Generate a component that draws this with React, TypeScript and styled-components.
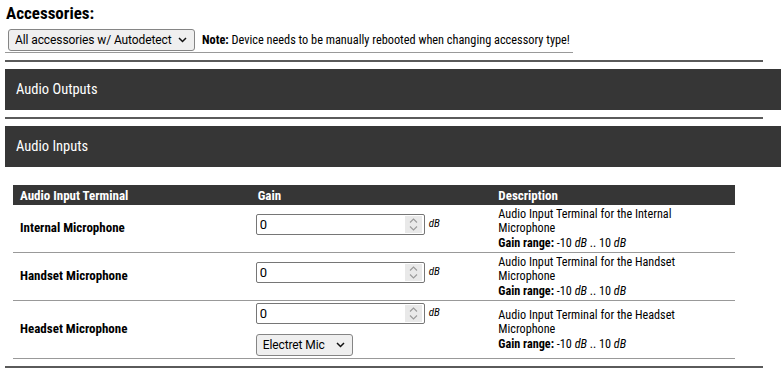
import React from "react";
import styled, { createGlobalStyle } from "styled-components";

const Global = createGlobalStyle`
  html, body { margin: 0; padding: 0; background: #fff; }
  body {
    font-family: "Roboto Condensed", "Liberation Sans Narrow", "DejaVu Sans Condensed", sans-serif;
    color: #000;
    overflow: hidden;
  }
`;

const Page = styled.div`
  width: 781px;
  padding: 3px 0 0 5px;
  box-sizing: border-box;
`;

const Title = styled.h2`
  margin: 0 0 0 1px;
  font-size: 17px;
  font-weight: 700;
  line-height: 20px;
`;

const AccessoryRow = styled.div`
  display: flex;
  align-items: center;
  gap: 7px;
  width: 568px;
  box-sizing: border-box;
  margin-top: 6px;
  padding: 0 0 1px 3px;
  border-bottom: 1px solid #999;
`;

const SelectWrap = styled.span<{ $w: number }>`
  position: relative;
  display: inline-flex;
  width: ${(p) => p.$w}px;
  height: 22px;
`;

const StyledSelect = styled.select`
  appearance: none;
  -webkit-appearance: none;
  width: 100%;
  height: 100%;
  box-sizing: border-box;
  margin: 0;
  border: 1px solid #858585;
  border-radius: 3px;
  background: #efefef;
  padding: 0 16px 0 6px;
  font-family: Roboto, "Liberation Sans", sans-serif;
  font-size: 12px;
  letter-spacing: -0.1px;
  color: #000;
`;

const Chevron = styled.svg`
  position: absolute;
  right: 8px;
  top: 50%;
  margin-top: -3px;
  width: 9px;
  height: 6px;
  pointer-events: none;
`;

const Note = styled.span`
  font-size: 12.3px;
  b { font-weight: 700; }
`;

const Rule = styled.hr`
  width: 758px;
  margin: 7px 0 0 0;
  border: 0;
  border-top: 2px solid #5a5a5a;
  height: 0;
`;

const SectionBar = styled.div`
  width: 776px;
  height: 41px;
  margin-top: 7px;
  background: #363636;
  color: #fff;
  display: flex;
  align-items: center;
  padding-left: 11px;
  box-sizing: border-box;
  font-size: 14.5px;
  font-weight: 400;
`;

const Table = styled.table`
  width: 722px;
  margin: 18px 0 0 8px;
  border-collapse: collapse;
  table-layout: fixed;
  font-size: 12.2px;
`;

const Th = styled.th<{ $first?: boolean }>`
  background: #363636;
  color: #fff;
  text-align: left;
  font-weight: 700;
  height: 20px;
  padding: 0 4px 0 ${(p) => (p.$first ? 7 : 4)}px;
  font-size: 13px;
`;

const Tr = styled.tr`
  border-bottom: 1px solid #999;
`;

const Td = styled.td<{ $label?: boolean }>`
  padding: 2px 4px 2px ${(p) => (p.$label ? 7 : 4)}px;
  vertical-align: middle;
  font-weight: ${(p) => (p.$label ? 700 : 400)};
  font-size: ${(p) => (p.$label ? 13 : 12.2)}px;
  line-height: 14.34px;
`;

const GainBox = styled.div`
  display: flex;
  flex-direction: column;
  align-items: flex-start;
  gap: 2px;
  margin-left: -2px;
`;

const InputLine = styled.div`
  display: flex;
  align-items: center;
  gap: 4px;
  margin-bottom: 8px;
`;

const InputWrap = styled.span`
  position: relative;
  display: inline-flex;
`;

const NumberInput = styled.input`
  width: 169px;
  height: 21px;
  box-sizing: border-box;
  margin: 0;
  font-family: Roboto, "Liberation Sans", sans-serif;
  font-size: 13px;
  padding: 1px 3px;
  border: 1px solid #767676;
  border-radius: 2px;
  -moz-appearance: textfield;
  &::-webkit-inner-spin-button,
  &::-webkit-outer-spin-button {
    -webkit-appearance: none;
    margin: 0;
  }
`;

const Spinner = styled.span`
  position: absolute;
  right: 3px;
  top: 2px;
  bottom: 2px;
  width: 17px;
  background: #e9e9e9;
  display: flex;
  align-items: center;
  justify-content: center;
  pointer-events: none;
`;

const Unit = styled.i`
  font-size: 11px;
`;

const rows = [
  { name: "Internal Microphone", what: "Internal", select: false },
  { name: "Handset Microphone", what: "Handset", select: false },
  { name: "Headset Microphone", what: "Headset", select: true },
];

function Select({ w, label }: { w: number; label: string }) {
  return (
    <SelectWrap $w={w}>
      <StyledSelect defaultValue="v">
        <option value="v">{label}</option>
      </StyledSelect>
      <Chevron viewBox="0 0 9 6">
        <path d="M1 1 L4.5 4.5 L8 1" fill="none" stroke="#111" strokeWidth="1.5" />
      </Chevron>
    </SelectWrap>
  );
}

export default function App() {
  return (
    <Page>
      <Global />
      <Title>Accessories:</Title>
      <AccessoryRow>
        <Select w={187} label="All accessories w/ Autodetect" />
        <Note>
          <b>Note:</b> Device needs to be manually rebooted when changing accessory type!
        </Note>
      </AccessoryRow>
      <Rule />
      <SectionBar>Audio Outputs</SectionBar>
      <Rule />
      <SectionBar>Audio Inputs</SectionBar>
      <Table>
        <thead>
          <tr>
            <Th $first>Audio Input Terminal</Th>
            <Th>Gain</Th>
            <Th>Description</Th>
          </tr>
        </thead>
        <tbody>
          {rows.map((r) => (
            <Tr key={r.name}>
              <Td $label>{r.name}</Td>
              <Td>
                <GainBox>
                  <InputLine>
                    <InputWrap>
                      <NumberInput type="number" defaultValue={0} />
                      <Spinner>
                        <svg width="9" height="15" viewBox="0 0 9 15">
                          <path d="M1 5.5 L4.5 2 L8 5.5" fill="none" stroke="#9a9a9a" strokeWidth="1.1" />
                          <path d="M1 9.5 L4.5 13 L8 9.5" fill="none" stroke="#9a9a9a" strokeWidth="1.1" />
                        </svg>
                      </Spinner>
                    </InputWrap>
                    <Unit>dB</Unit>
                  </InputLine>
                  {r.select && <Select w={97} label="Electret Mic" />}
                </GainBox>
              </Td>
              <Td>
                Audio Input Terminal for the {r.what}
                <br />
                Microphone
                <br />
                <b>Gain range:</b> -10 <i>dB</i> .. 10 <i>dB</i>
              </Td>
            </Tr>
          ))}
        </tbody>
      </Table>
      <Rule />
    </Page>
  );
}
